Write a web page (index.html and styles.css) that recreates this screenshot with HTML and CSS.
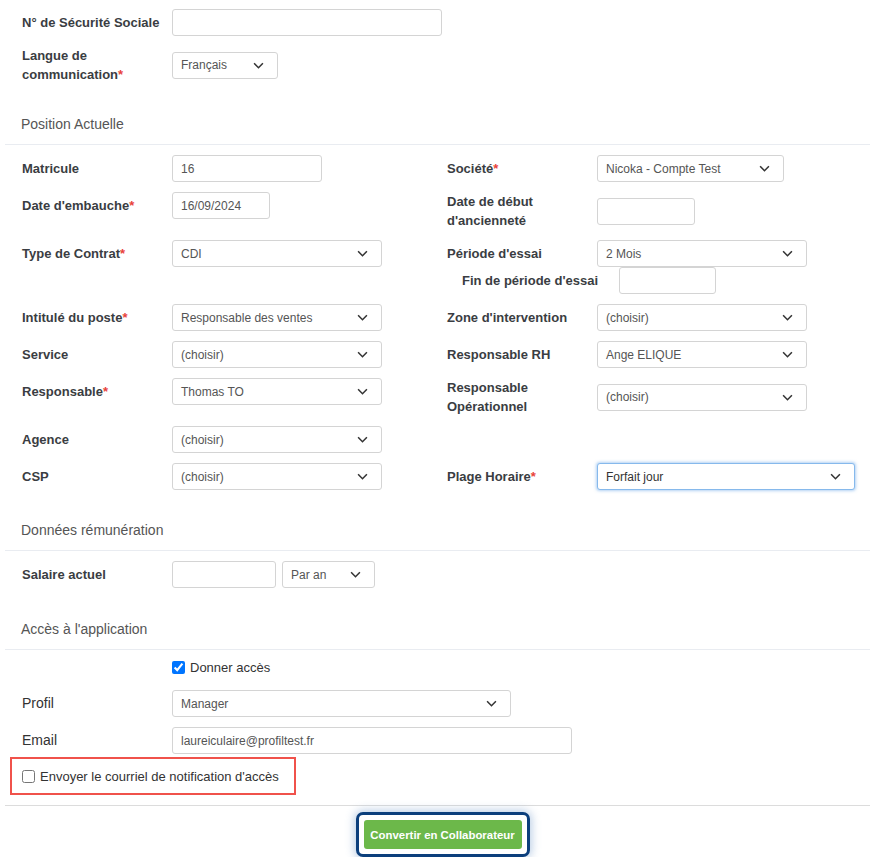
FILE: index.html
```html
<!DOCTYPE html>
<html lang="fr">
<head>
<meta charset="utf-8">
<title>Formulaire</title>
<link rel="stylesheet" href="styles.css">
</head>
<body>
<div class="page">
  <div class="rows first">
    <div class="row">
      <div class="half">
        <span class="lbl">N° de Sécurité Sociale</span>
        <div class="field w270"></div>
      </div>
    </div>
    <div class="row">
      <div class="half">
        <span class="lbl">Langue de communication<span class="req">*</span></span>
        <div class="field select w106"><span>Français</span><svg class="chev" viewBox="0 0 10 6"><path d="M1 1 L5 5 L9 1"/></svg></div>
      </div>
    </div>
  </div>

  <div class="section-head">Position Actuelle</div>
  <div class="rows">
    <div class="row">
      <div class="half">
        <span class="lbl">Matricule</span>
        <div class="field w150"><span>16</span></div>
      </div>
      <div class="half">
        <span class="lbl">Société<span class="req">*</span></span>
        <div class="field select w187"><span>Nicoka - Compte Test</span><svg class="chev" viewBox="0 0 10 6"><path d="M1 1 L5 5 L9 1"/></svg></div>
      </div>
    </div>
    <div class="row">
      <div class="half">
        <span class="lbl">Date d'embauche<span class="req">*</span></span>
        <div class="field w98"><span>16/09/2024</span></div>
      </div>
      <div class="half">
        <span class="lbl">Date de début d'ancienneté</span>
        <div class="field w98"></div>
      </div>
    </div>
    <div class="row">
      <div class="half">
        <span class="lbl">Type de Contrat<span class="req">*</span></span>
        <div class="field select w210"><span>CDI</span><svg class="chev" viewBox="0 0 10 6"><path d="M1 1 L5 5 L9 1"/></svg></div>
      </div>
      <div class="half stack">
        <div class="sub">
          <span class="lbl">Période d'essai</span>
          <div class="field select w210"><span>2 Mois</span><svg class="chev" viewBox="0 0 10 6"><path d="M1 1 L5 5 L9 1"/></svg></div>
        </div>
        <div class="sub indent">
          <span class="lbl lbl-sub">Fin de période d'essai</span>
          <div class="field w97"></div>
        </div>
      </div>
    </div>
    <div class="row">
      <div class="half">
        <span class="lbl">Intitulé du poste<span class="req">*</span></span>
        <div class="field select w210"><span>Responsable des ventes</span><svg class="chev" viewBox="0 0 10 6"><path d="M1 1 L5 5 L9 1"/></svg></div>
      </div>
      <div class="half">
        <span class="lbl">Zone d'intervention</span>
        <div class="field select w210"><span>(choisir)</span><svg class="chev" viewBox="0 0 10 6"><path d="M1 1 L5 5 L9 1"/></svg></div>
      </div>
    </div>
    <div class="row">
      <div class="half">
        <span class="lbl">Service</span>
        <div class="field select w210"><span>(choisir)</span><svg class="chev" viewBox="0 0 10 6"><path d="M1 1 L5 5 L9 1"/></svg></div>
      </div>
      <div class="half">
        <span class="lbl">Responsable RH</span>
        <div class="field select w210"><span>Ange ELIQUE</span><svg class="chev" viewBox="0 0 10 6"><path d="M1 1 L5 5 L9 1"/></svg></div>
      </div>
    </div>
    <div class="row">
      <div class="half">
        <span class="lbl">Responsable<span class="req">*</span></span>
        <div class="field select w210"><span>Thomas TO</span><svg class="chev" viewBox="0 0 10 6"><path d="M1 1 L5 5 L9 1"/></svg></div>
      </div>
      <div class="half">
        <span class="lbl">Responsable Opérationnel</span>
        <div class="field select w210"><span>(choisir)</span><svg class="chev" viewBox="0 0 10 6"><path d="M1 1 L5 5 L9 1"/></svg></div>
      </div>
    </div>
    <div class="row">
      <div class="half">
        <span class="lbl">Agence</span>
        <div class="field select w210"><span>(choisir)</span><svg class="chev" viewBox="0 0 10 6"><path d="M1 1 L5 5 L9 1"/></svg></div>
      </div>
    </div>
    <div class="row">
      <div class="half">
        <span class="lbl">CSP</span>
        <div class="field select w210"><span>(choisir)</span><svg class="chev" viewBox="0 0 10 6"><path d="M1 1 L5 5 L9 1"/></svg></div>
      </div>
      <div class="half">
        <span class="lbl">Plage Horaire<span class="req">*</span></span>
        <div class="field select focus w258"><span class="dark">Forfait jour</span><svg class="chev" viewBox="0 0 10 6"><path d="M1 1 L5 5 L9 1"/></svg></div>
      </div>
    </div>
  </div>

  <div class="section-head">Données rémunération</div>
  <div class="rows">
    <div class="row">
      <div class="half">
        <span class="lbl">Salaire actuel</span>
        <div class="pair">
          <div class="field w104"></div>
          <div class="field select w93"><span>Par an</span><svg class="chev" viewBox="0 0 10 6"><path d="M1 1 L5 5 L9 1"/></svg></div>
        </div>
      </div>
    </div>
  </div>

  <div class="section-head access">Accès à l'application</div>
  <div class="rows">
    <div class="row check-row">
      <div class="half">
        <span class="lbl"></span>
        <label class="check"><input type="checkbox" checked> Donner accès</label>
      </div>
    </div>
    <div class="row">
      <div class="half wide">
        <span class="lbl plain">Profil</span>
        <div class="field select w339"><span>Manager</span><svg class="chev" viewBox="0 0 10 6"><path d="M1 1 L5 5 L9 1"/></svg></div>
      </div>
    </div>
    <div class="row">
      <div class="half wide">
        <span class="lbl plain">Email</span>
        <div class="field w400"><span>laureiculaire@profiltest.fr</span></div>
      </div>
    </div>
  </div>
  <div class="highlight">
    <label class="check"><input type="checkbox"> Envoyer le courriel de notification d'accès</label>
  </div>

  <div class="footer">
    <div class="btn-ring"><button class="btn" type="button">Convertir en Collaborateur</button></div>
  </div>
</div>
</body>
</html>
```

FILE: styles.css
```css
* { box-sizing: border-box; }
body {
  margin: 0;
  background: #fff;
  font-family: "Liberation Sans", Arial, sans-serif;
  color: #333;
}
.page {
  width: 870px;
  padding-top: 9px;
}
.rows {
  padding-left: 22px;
}
.row {
  display: flex;
  align-items: flex-start;
  margin-bottom: 10px;
}
.row:last-child { margin-bottom: 0; }
.half {
  width: 425px;
  display: flex;
  align-items: center;
  flex-shrink: 0;
}
.half.wide { width: 600px; }
.half.stack {
  flex-direction: column;
  align-items: flex-start;
}
.sub {
  display: flex;
  align-items: center;
}
.sub.indent { padding-left: 15px; }
.lbl {
  width: 150px;
  flex-shrink: 0;
  font-size: 13px;
  font-weight: bold;
  line-height: 19px;
  color: #3a3d42;
  padding-right: 10px;
}
.lbl-sub { width: 157px; padding-right: 0; }
.lbl.plain {
  font-weight: normal;
  font-size: 14px;
  color: #333;
}
.req { color: #e8423a; }
.field {
  height: 27px;
  border: 1px solid #d4d4d4;
  border-radius: 3px;
  background: #fff;
  display: flex;
  align-items: center;
  padding: 0 8px;
  font-size: 12px;
  color: #555;
  flex-shrink: 0;
}
.field.select {
  justify-content: space-between;
  padding-right: 13px;
}
.chev {
  width: 11px;
  height: 7px;
  fill: none;
  stroke: #333;
  stroke-width: 1.4;
}
.field.focus {
  border-color: #86b9ec;
  box-shadow: 0 0 3px 1px rgba(102, 165, 233, 0.5);
}
.dark { color: #333; }
.w98 { width: 98px; }
.w97 { width: 97px; }
.w104 { width: 104px; }
.w93 { width: 93px; }
.w106 { width: 106px; }
.w150 { width: 150px; }
.w187 { width: 187px; }
.w210 { width: 210px; }
.w258 { width: 258px; }
.w270 { width: 270px; }
.w339 { width: 339px; }
.w400 { width: 400px; }
.pair { display: flex; gap: 6px; }
.section-head {
  margin: 22px 0 10px 5px;
  padding: 8px 16px 10px;
  font-size: 14px;
  line-height: 20px;
  color: #555;
  border-bottom: 1px solid #e9ecf1;
}
.section-head.access { margin-top: 23px; }
.check-row { height: 20px; margin-bottom: 10px; }
.check {
  display: flex;
  align-items: center;
  gap: 5px;
  font-size: 13px;
  color: #333;
  white-space: nowrap;
}
.check input {
  margin: 0;
  width: 13px;
  height: 13px;
}
.highlight {
  margin: 3px 0 0 10px;
  width: 286px;
  height: 38px;
  border: 2px solid #f0524b;
  display: flex;
  align-items: center;
  padding-left: 10px;
}
.footer {
  margin: 10px 0 0 5px;
  border-top: 1px solid #dcdcdc;
  padding: 6px 0 0 10px;
  display: flex;
  justify-content: center;
}
.btn-ring {
  border: 3px solid #0c3f7c;
  border-radius: 7px;
  padding: 5px;
  background: #fff;
  box-shadow: 0 0 8px 2px rgba(110, 150, 200, 0.45);
}
.btn {
  display: block;
  width: 158px;
  height: 29px;
  border: none;
  border-radius: 3px;
  background: #6cb84a;
  color: #fff;
  font-family: "Liberation Sans", Arial, sans-serif;
  font-size: 11.4px;
  font-weight: bold;
  padding: 0;
}
```
